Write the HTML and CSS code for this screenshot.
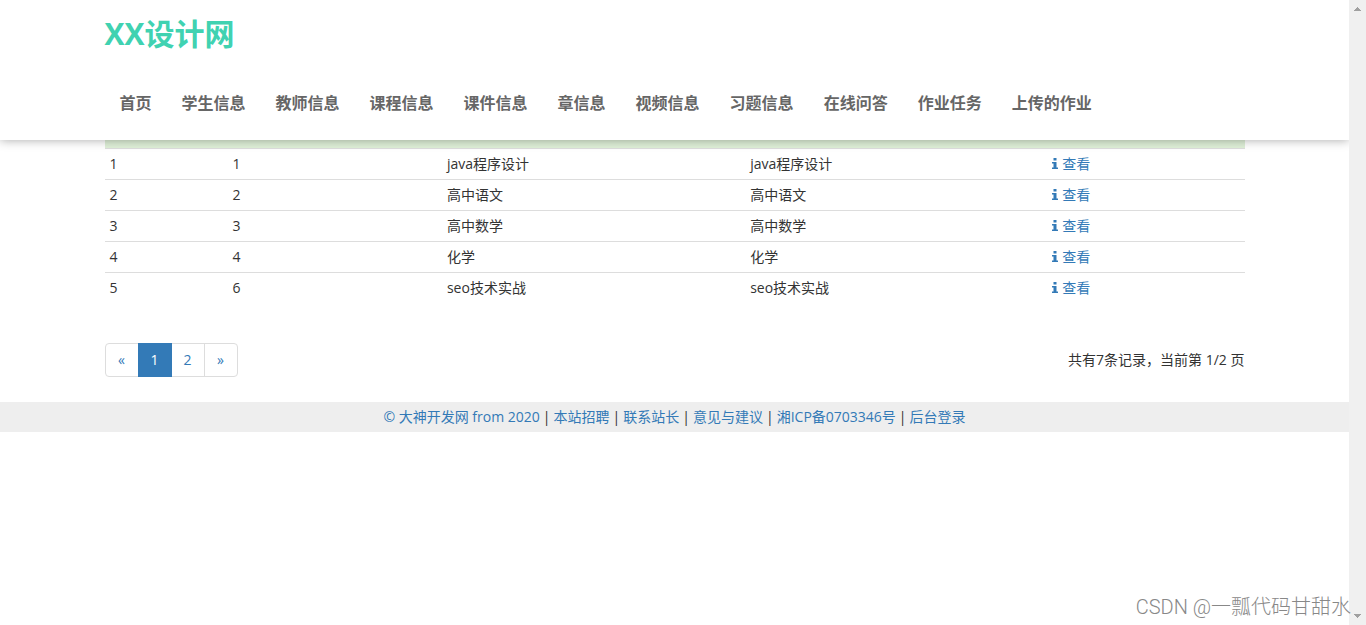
FILE: index.html
```
<!DOCTYPE html>
<html lang="zh-CN">
<head>
<meta charset="utf-8">
<title>XX设计网</title>
<link rel="stylesheet" href="styles.css">
</head>
<body>
<svg class="defs" aria-hidden="true"><symbol id="info" viewBox="0 0 6 11"><path d="M1.5 0h3v2.5h-3zM0 4h4.5v5.5H6V11H0V9.500h1.500v-4H0z"/></symbol></svg>
<div class="page">
  <header class="header">
    <div class="container">
      <h1 class="logo">XX设计网</h1>
      <nav class="nav">
        <a href="#">首页</a><a href="#">学生信息</a><a href="#">教师信息</a><a href="#">课程信息</a><a href="#">课件信息</a><a href="#">章信息</a><a href="#">视频信息</a><a href="#">习题信息</a><a href="#">在线问答</a><a href="#">作业任务</a><a href="#">上传的作业</a>
      </nav>
    </div>
  </header>
  <main class="container">
    <table class="table">
      <colgroup><col class="col-index"><col class="col-id"><col class="col-name"><col class="col-course"><col class="col-action"></colgroup>
      <thead><tr><td colspan="5"></td></tr></thead>
      <tbody>
        <tr><td>1</td><td>1</td><td>java程序设计</td><td>java程序设计</td><td><a href="#"><svg class="info"><use href="#info"/></svg>查看</a></td></tr>
        <tr><td>2</td><td>2</td><td>高中语文</td><td>高中语文</td><td><a href="#"><svg class="info"><use href="#info"/></svg>查看</a></td></tr>
        <tr><td>3</td><td>3</td><td>高中数学</td><td>高中数学</td><td><a href="#"><svg class="info"><use href="#info"/></svg>查看</a></td></tr>
        <tr><td>4</td><td>4</td><td>化学</td><td>化学</td><td><a href="#"><svg class="info"><use href="#info"/></svg>查看</a></td></tr>
        <tr><td>5</td><td>6</td><td>seo技术实战</td><td>seo技术实战</td><td><a href="#"><svg class="info"><use href="#info"/></svg>查看</a></td></tr>
      </tbody>
    </table>
    <div class="pager">
      <nav class="pages"><a href="#">«</a><a class="active" href="#">1</a><a href="#">2</a><a href="#">»</a></nav>
      <p class="total">共有7条记录，当前第 1/2 页</p>
    </div>
  </main>
  <footer class="footer">
    <a href="#">© 大神开发网 from 2020</a><span>|</span><a href="#">本站招聘</a><span>|</span><a href="#">联系站长</a><span>|</span><a href="#">意见与建议</a><span>|</span><a href="#">湘ICP备0703346号</a><span>|</span><a href="#">后台登录</a>
  </footer>
</div>
<div class="scrollbar" aria-hidden="true">
  <svg viewBox="0 0 7 4"><path d="M3 0h1v1h1v1h1v1h1v1H0V3h1V2h1V1h1z"/></svg>
  <svg viewBox="0 0 7 4"><path d="M0 0h7v1H6v1H5v1H4v1H3V3H2V2H1V1H0z"/></svg>
</div>
<div class="watermark">CSDN @一瓢代码甘甜水</div>
</body>
</html>
```
FILE: styles.css
```
* { box-sizing: border-box; }
body {
  margin: 0;
  min-height: 100vh;
  display: flex;
  position: relative;
  background: #fff;
  color: #333;
  font: 14px/20px "Open Sans", "Noto Sans CJK SC", sans-serif;
}
a { color: #337ab7; text-decoration: none; }
.defs { position: absolute; width: 0; height: 0; }
.page { flex: 1; min-width: 0; overflow: hidden; }
.container { max-width: 1170px; margin: 0 auto; padding: 0 15px; }
.header {
  position: relative;
  padding: 14px 0 20px;
  background: #fff;
  box-shadow: 0 0 10px rgba(0, 0, 0, 0.35);
}
.logo { margin: 0; font-size: 30px; line-height: 40px; color: #40d2b1; }
.nav { display: flex; flex-wrap: wrap; margin-top: 33px; }
.nav a {
  padding: 6px 15px 7px;
  font-size: 16px;
  font-weight: bold;
  color: #666;
}
.table { width: 100%; table-layout: fixed; border-collapse: collapse; }
.col-index { width: 10.8%; }
.col-id { width: 18.8%; }
.col-name { width: 26.6%; }
.col-course { width: 26.5%; }
.col-action { width: 17.3%; }
.table td { height: 31px; padding: 5px; border-top: 1px solid #ddd; }
.table thead td { height: 8px; padding: 4px 0; border: 0; border-bottom: 1px solid #ddd; background: #dff0d8; }
.info { width: 6px; height: 11px; margin-right: 4px; fill: #337ab7; }
.pager { display: flex; justify-content: space-between; align-items: center; margin-top: 39px; }
.pages { display: flex; }
.pages a { min-width: 34px; padding: 6px 12px; border: 1px solid #ddd; margin-left: -1px; text-align: center; }
.pages a:first-child { margin-left: 0; border-radius: 4px 0 0 4px; }
.pages a:last-child { border-radius: 0 4px 4px 0; }
.pages .active { position: relative; background: #337ab7; border-color: #337ab7; color: #fff; }
.total { margin: 0; }
.footer {
  display: flex;
  flex-wrap: wrap;
  justify-content: center;
  gap: 3px;
  margin-top: 25px;
  padding: 5px 0;
  background: #eee;
}
.scrollbar {
  display: flex;
  flex-direction: column;
  justify-content: space-between;
  align-items: center;
  width: 17px;
  padding: 7px 0;
  background: #f0f0f0;
}
.scrollbar svg { width: 7px; height: 4px; fill: #a0a0a0; }
.watermark {
  position: absolute;
  right: 15px;
  bottom: 3px;
  font: 20px/30px Roboto, "Noto Sans CJK SC", sans-serif;
  font-weight: 300;
  color: #888;
}
```
